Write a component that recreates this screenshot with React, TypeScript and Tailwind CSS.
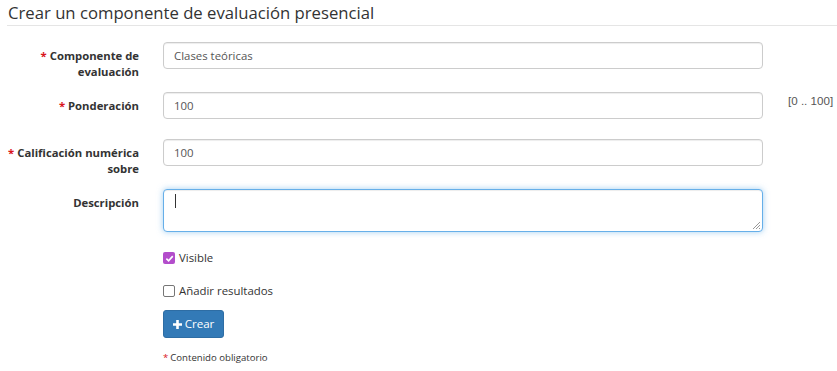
const Req = () => <span className="text-[#d9161c] mr-[3px]">*</span>;

const Label = ({ children, required }: { children: React.ReactNode; required?: boolean }) => (
  <div className="w-[139px] shrink-0 text-right pt-[6px] text-[11.3px] leading-[16px] font-bold text-[#333]">
    {required && <Req />}
    {children}
  </div>
);

const TextInput = ({ value }: { value: string }) => (
  <div className="ml-[24px] w-[600px] h-[27px] flex items-center px-[10px] border border-[#ccc] rounded-[4px] bg-white text-[11.4px] text-[#555] shadow-[inset_0_1px_1px_rgba(0,0,0,0.075)]">
    {value}
  </div>
);

const App = () => {
  return (
    <div className="w-[837px] h-[371px] bg-white overflow-hidden font-['Open_Sans',sans-serif] text-[#333]">
      {/* Title */}
      <div className="ml-[7px] pt-[3px] pb-[2px] border-b border-[#e5e5e5]">
        <h1 className="pl-[1px] text-[16.7px] leading-[20px] font-normal text-[#333]">
          Crear un componente de evaluación presencial
        </h1>
      </div>

      {/* Form */}
      <div className="mt-[16px] flex items-start">
        <Label required>
          Componente de
          <br />
          evaluación
        </Label>
        <TextInput value="Clases teóricas" />
      </div>

      <div className="mt-[12px] flex items-start">
        <Label required>Ponderación</Label>
        <TextInput value="100" />
        <div className="ml-[25px] pt-[1px] text-[11.6px] leading-[16px] text-[#555] font-['Liberation_Sans',sans-serif]">
          [0 .. 100]
        </div>
      </div>

      <div className="mt-[20px] flex items-start">
        <Label required>
          Calificación numérica
          <br />
          sobre
        </Label>
        <TextInput value="100" />
      </div>

      <div className="mt-[12px] flex items-start">
        <Label>Descripción</Label>
        <div className="relative ml-[24px] w-[600px] h-[43px] border border-[#66afe9] rounded-[4px] bg-white shadow-[inset_0_1px_1px_rgba(0,0,0,0.075),0_0_6px_rgba(102,175,233,0.6)] px-[11px] pt-[4px]">
          <span className="block w-[1px] h-[14px] bg-[#333]" />
          <svg className="absolute right-[1px] bottom-[1px]" width="9" height="9" viewBox="0 0 9 9">
            <path d="M8 1L1 8M8 4L4 8M8 7L7 8" stroke="#999" strokeWidth="1" />
          </svg>
        </div>
      </div>

      {/* Checkboxes */}
      <div className="mt-[16px] ml-[163px] h-[20px] flex items-center gap-[4px] text-[11.4px] text-[#333]">
        <span className="w-[12px] h-[12px] rounded-[2px] bg-[#b34dcb] flex items-center justify-center">
          <svg width="9" height="9" viewBox="0 0 10 10">
            <path d="M1.5 5.2L4 7.6L8.6 2.4" fill="none" stroke="white" strokeWidth="1.8" />
          </svg>
        </span>
        Visible
      </div>

      <div className="mt-[13px] ml-[163px] h-[20px] flex items-center gap-[4px] text-[11.4px] text-[#333]">
        <span className="w-[12px] h-[12px] rounded-[2px] border border-[#767676] bg-white" />
        Añadir resultados
      </div>

      {/* Submit */}
      <div className="mt-[9px] ml-[163px]">
        <button className="w-[61px] h-[28px] flex items-center justify-center gap-[3px] bg-[#337ab7] border border-[#2e6da4] rounded-[3px] text-white text-[11.6px]">
          <svg width="9" height="9" viewBox="0 0 9 9">
            <path d="M3.2 0H5.8V3.2H9V5.8H5.8V9H3.2V5.8H0V3.2H3.2Z" fill="white" />
          </svg>
          Crear
        </button>
      </div>

      <div className="mt-[13px] ml-[163px] text-[9.6px] leading-[14px] text-[#333]">
        <span className="text-[#d9161c] mr-[2px]">*</span>
        Contenido obligatorio
      </div>
    </div>
  );
};

export default App;
